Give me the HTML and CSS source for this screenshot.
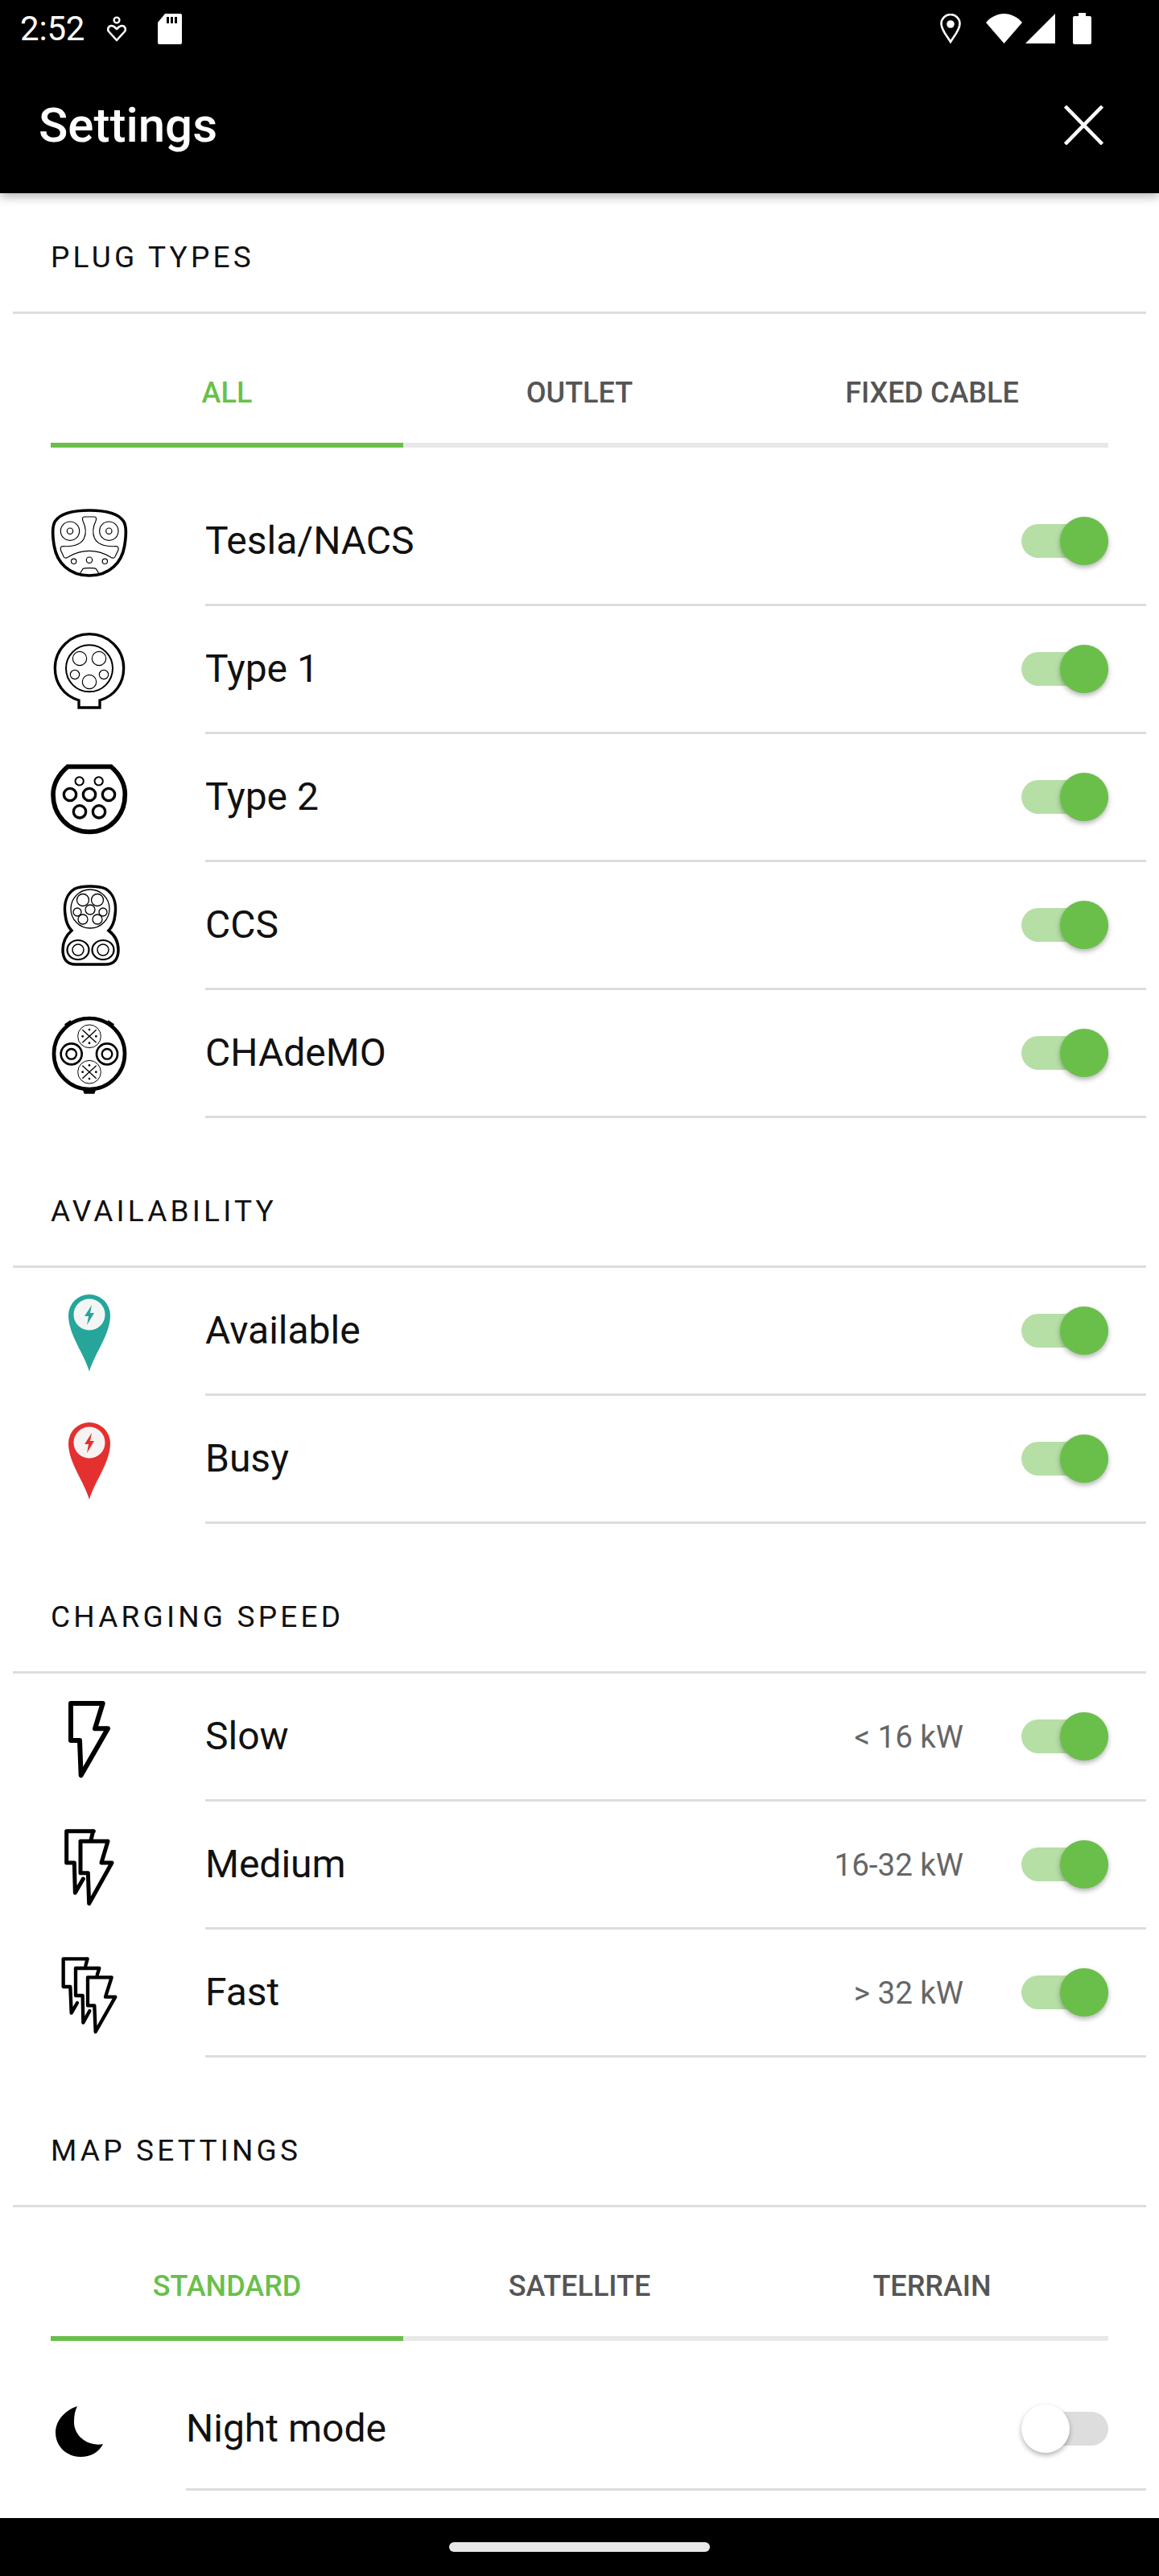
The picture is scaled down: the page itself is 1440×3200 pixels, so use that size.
FILE: index.html
```html
<!DOCTYPE html>
<html lang="en">
<head>
<meta charset="utf-8">
<title>Settings</title>
<link rel="stylesheet" href="styles.css">
</head>
<body>
<header class="app-header">
  <div class="status-bar">
    <span class="time">2:52</span>
    <svg class="st st-dnd" viewBox="0 0 24 32"><circle cx="12" cy="5" r="3.4" fill="none" stroke="#fff" stroke-width="2.4"/><path d="M12 30 2 19c-2-3 0-7 3.500-7 3 0 4.500 2 6.500 4 2-2 3.500-4 6.500-4C22 12 24 16 22 19Z" fill="none" stroke="#fff" stroke-width="2.600" stroke-linejoin="round"/></svg>
    <svg class="st st-sd" viewBox="0 0 30 38"><path d="M9 0H28a2 2 0 0 1 2 2V36a2 2 0 0 1-2 2H2a2 2 0 0 1-2-2V11Z" fill="#fff"/><path d="M11 4h3v8h-3zM16 4h3v8h-3zM21 4h3v8h-3z" fill="#000"/></svg>
    <span class="status-spacer"></span>
    <svg class="st st-loc" viewBox="0 0 26 37"><path d="M13 35C8 27 1.500 20 1.500 12.500a11.500 11.500 0 0 1 23 0C24.500 20 18 27 13 35Z" fill="none" stroke="#fff" stroke-width="2.600"/><circle cx="13" cy="13" r="4.800" fill="#fff"/></svg>
    <svg class="st st-wifi" viewBox="0 0 45 37"><path d="M22.500 37 0 11C6 4 14 0 22.500 0S39 4 45 11Z" fill="#fff"/></svg>
    <svg class="st st-sig" viewBox="0 0 37 37"><path d="M37 0V37H0Z" fill="#fff"/></svg>
    <svg class="st st-bat" viewBox="0 0 23 39"><path d="M7 0h9v4h5a2 2 0 0 1 2 2V37a2 2 0 0 1-2 2H2a2 2 0 0 1-2-2V6a2 2 0 0 1 2-2h5Z" fill="#fff"/></svg>
  </div>
  <div class="toolbar">
    <h1 class="toolbar-title">Settings</h1>
    <svg class="close" viewBox="0 0 49 49"><path d="M1.500 1 47.500 48M47.500 1 1.500 48" stroke="#fff" stroke-width="4.500" fill="none"/></svg>
  </div>
</header>

<main class="content">
  <h2 class="section-title first">PLUG TYPES</h2>
  <div class="tabs">
    <div class="tab active">ALL</div>
    <div class="tab">OUTLET</div>
    <div class="tab">FIXED CABLE</div>
  </div>
  <ul class="rows rows-tabbed">
    <li class="row">
      <svg class="icon" viewBox="69 15 288 336" fill="none" stroke="#000">
        <path d="M213 72C265 72 320 82 340 112C352 130 350 170 344 205C334 265 290 315 213 315C136 315 92 265 82 205C76 170 74 130 86 112C106 82 161 72 213 72Z" stroke-width="11"/>
        <g stroke-width="3.500"><circle cx="141" cy="149" r="35"/><circle cx="141" cy="149" r="11"/><circle cx="286" cy="149" r="35"/><circle cx="286" cy="149" r="11"/>
        <path d="M195 96H232C240 96 240 105 236 114C226 135 224 155 232 175C242 198 270 208 312 206C322 206 323 214 320 222L308 246C304 252 296 250 288 244C242 216 184 216 138 244C130 250 122 252 118 246L107 222C104 214 105 206 115 206C156 208 184 198 194 175C202 155 200 135 190 114C186 105 186 96 195 96Z"/>
        <circle cx="155" cy="262" r="9.500"/><circle cx="213" cy="257" r="11"/><circle cx="271" cy="262" r="9.500"/><path d="M179 306 189 290C192 286 236 286 238 290L248 306"/></g>
      </svg>
      <div class="row-body"><span class="label">Tesla/NACS</span><span class="toggle on"></span></div>
    </li>
    <li class="row">
      <svg class="icon" viewBox="69 12 288 336" fill="none" stroke="#000">
        <path d="M174 300C116 282 85 235 85 180C85 108 143 53 213 53S341 108 341 180C341 235 310 282 252 300V327H174Z" stroke-width="10"/>
        <circle cx="213" cy="181" r="87" stroke-width="6"/>
        <g stroke-width="3.500"><circle cx="177" cy="144" r="26"/><circle cx="249" cy="144" r="26"/><circle cx="159" cy="204" r="17"/><circle cx="267" cy="204" r="17"/><circle cx="213" cy="231" r="26"/></g>
      </svg>
      <div class="row-body"><span class="label">Type 1</span><span class="toggle on"></span></div>
    </li>
    <li class="row">
      <svg class="icon" viewBox="69 39 288 336" fill="none" stroke="#000">
        <path d="M132 97H294C326 125 346 160 346 201C346 281 288 340 213 340S78 281 78 201C78 160 100 125 132 97Z" stroke-width="17"/>
        <g stroke-width="6"><circle cx="176" cy="151" r="15.500"/><circle cx="248" cy="151" r="15.500"/></g>
        <g stroke-width="10"><circle cx="141" cy="201" r="23"/><circle cx="213" cy="201" r="23"/><circle cx="285" cy="201" r="23"/><circle cx="177" cy="265" r="23"/><circle cx="249" cy="265" r="23"/></g>
      </svg>
      <div class="row-body"><span class="label">Type 2</span><span class="toggle on"></span></div>
    </li>
    <li class="row">
      <svg class="icon" viewBox="0 0 96 112" fill="none" stroke="#000">
        <path d="M30 12C40 8 58 8 68 12C78 18 82 30 80 44C79 54 76 60 72 64C80 70 84 78 84 88C84 100 78 106 68 106H31C21 106 15 100 15 88C15 78 19 70 26 64C22 60 19 54 18 44C16 30 20 18 30 12Z" stroke-width="3.500"/>
        <g stroke-width="1.300"><circle cx="49" cy="37" r="24"/><circle cx="40" cy="26" r="7.500"/><circle cx="58" cy="26" r="7.500"/><circle cx="33" cy="41" r="5"/><circle cx="65" cy="41" r="5"/><circle cx="40" cy="50" r="6"/><circle cx="58" cy="50" r="6"/><circle cx="49" cy="38" r="6"/></g>
        <g stroke-width="2.200"><ellipse cx="34" cy="88" rx="13.500" ry="12"/><ellipse cx="65" cy="88" rx="13.500" ry="12"/></g>
        <g stroke-width="1.500"><circle cx="34" cy="88" r="7"/><circle cx="65" cy="88" r="7"/></g>
      </svg>
      <div class="row-body"><span class="label">CCS</span><span class="toggle on"></span></div>
    </li>
    <li class="row">
      <svg class="icon" viewBox="69 123 288 336" fill="none" stroke="#000">
        <circle cx="213" cy="297" r="132" stroke-width="14"/>
        <path d="M120 187 142 172 152 186 128 200ZM306 187 284 172 274 186 298 200ZM188 430H238L232 446H194Z" fill="#000" stroke="none"/>
        <g stroke-width="3"><circle cx="213" cy="232" r="43"/><circle cx="213" cy="365" r="43"/></g>
        <g stroke-width="4"><path d="M187 208 239 256M239 208 187 256M187 341 239 389M239 341 187 389"/></g>
        <g fill="#000" stroke="none"><circle cx="213" cy="207" r="4"/><circle cx="188" cy="232" r="4"/><circle cx="238" cy="232" r="4"/><circle cx="213" cy="257" r="4"/><circle cx="213" cy="340" r="4"/><circle cx="188" cy="365" r="4"/><circle cx="238" cy="365" r="4"/><circle cx="213" cy="390" r="4"/></g>
        <g stroke-width="8"><circle cx="146" cy="298" r="39"/><circle cx="279" cy="298" r="39"/></g>
        <g stroke-width="7"><circle cx="146" cy="298" r="19"/><circle cx="279" cy="298" r="19"/></g>
      </svg>
      <div class="row-body"><span class="label">CHAdeMO</span><span class="toggle on"></span></div>
    </li>
  </ul>

  <h2 class="section-title">AVAILABILITY</h2>
  <ul class="rows">
    <li class="row">
      <svg class="icon" viewBox="0 0 96 112">
        <path d="M48 108C42 86 22 62 22 38A26 26 0 0 1 74 38C74 62 54 86 48 108Z" fill="#26a69a"/>
        <circle cx="48" cy="37" r="19.500" fill="#f4f6f5"/>
        <path d="M51 25 42 39H47L45 50 54 35H49Z" fill="#26a69a"/>
      </svg>
      <div class="row-body"><span class="label">Available</span><span class="toggle on"></span></div>
    </li>
    <li class="row">
      <svg class="icon" viewBox="0 0 96 112">
        <path d="M48 108C42 86 22 62 22 38A26 26 0 0 1 74 38C74 62 54 86 48 108Z" fill="#e53030"/>
        <circle cx="48" cy="37" r="19.500" fill="#f7f3f3"/>
        <path d="M51 25 42 39H47L45 50 54 35H49Z" fill="#e53030"/>
      </svg>
      <div class="row-body"><span class="label">Busy</span><span class="toggle on"></span></div>
    </li>
  </ul>

  <h2 class="section-title">CHARGING SPEED</h2>
  <ul class="rows">
    <li class="row">
      <svg class="icon" viewBox="69 28 288 336" fill="none" stroke="#000" stroke-width="18" stroke-linejoin="round" stroke-linecap="round">
        <path d="M144 76H263L234 170H282L182 344 177 214H144Z"/>
      </svg>
      <div class="row-body"><span class="label">Slow</span><span class="value">&lt; 16 kW</span><span class="toggle on"></span></div>
    </li>
    <li class="row">
      <svg class="icon" viewBox="69 -5 288 336" fill="none" stroke="#000" stroke-width="15" stroke-linejoin="round" stroke-linecap="round">
        <path d="M227 42 219 76M229 42H128V160H157L160 272 190 220"/>
        <path d="M180 80H282L258 160H297L212 312 208 198H180Z"/>
      </svg>
      <div class="row-body"><span class="label">Medium</span><span class="value">16-32 kW</span><span class="toggle on"></span></div>
    </li>
    <li class="row">
      <svg class="icon" viewBox="69 472 288 336" fill="none" stroke="#000" stroke-width="13" stroke-linejoin="round" stroke-linecap="round">
        <path d="M206 518H116V622H142L146 720 168 682M206 518 199 544"/>
        <path d="M250 553H162V655H188L190 756 214 712M250 553 242 579"/>
        <path d="M207 587H296L273 660H310L236 790 232 692H207Z"/>
      </svg>
      <div class="row-body"><span class="label">Fast</span><span class="value">&gt; 32 kW</span><span class="toggle on"></span></div>
    </li>
  </ul>

  <h2 class="section-title">MAP SETTINGS</h2>
  <div class="tabs">
    <div class="tab active">STANDARD</div>
    <div class="tab">SATELLITE</div>
    <div class="tab">TERRAIN</div>
  </div>
  <div class="row row-night">
    <svg class="moon" viewBox="0 0 59 63"><path d="M27 0C10 6 0 19 0 33C0 50 14 63 31 63C44 63 54 57 59 47C56 48 52 48 47 47C32 44 23 32 23 20C23 12 24 6 27 0Z" fill="#000"/></svg>
    <div class="row-body"><span class="label">Night mode</span><span class="toggle"></span></div>
  </div>
</main>

<footer class="nav-bar"><span class="nav-pill"></span></footer>
</body>
</html>
```

FILE: styles.css
```css
* { box-sizing: border-box; }
html, body { margin: 0; padding: 0; }
body {
  width: 1440px;
  height: 3200px;
  display: flex;
  flex-direction: column;
  overflow: hidden;
  background: #fff;
  font-family: Roboto, "Liberation Sans", sans-serif;
  color: #000;
}

.app-header {
  flex: none;
  height: 240px;
  background: #000;
  color: #fff;
  box-shadow: 0 4px 12px rgba(0, 0, 0, .3);
  position: relative;
  z-index: 1;
}
.status-bar {
  height: 72px;
  display: flex;
  align-items: flex-start;
  padding: 17px 84px 0 25px;
}
.time { font-size: 42px; line-height: 38px; width: 108px; letter-spacing: -.2px; }
.st { display: block; flex: none; }
.st-dnd { width: 24px; height: 32px; margin-top: 3px; }
.st-sd { width: 30px; height: 38px; margin-left: 39px; }
.status-spacer { flex: 1; }
.st-loc { width: 26px; height: 37px; }
.st-wifi { width: 45px; height: 37px; margin-left: 31px; }
.st-sig { width: 37px; height: 37px; margin-left: 4px; }
.st-bat { width: 23px; height: 39px; margin-left: 22px; margin-top: -1px; }

.toolbar {
  height: 168px;
  display: flex;
  align-items: center;
  justify-content: space-between;
  padding: 0 69px 0 48px;
}
.toolbar-title { margin: 0; font-size: 60px; font-weight: 500; line-height: 68px; }
.close { width: 49px; height: 49px; display: block; margin-top: -2px; }

.content { flex: 1; min-height: 0; overflow: hidden; }

.section-title {
  margin: 94px 16px 0;
  padding: 0 0 45px 47px;
  border-bottom: 3px solid #ddd;
  font-size: 37px;
  font-weight: 400;
  line-height: 44px;
  letter-spacing: 4.200px;
  color: #111;
}
.section-title.first { margin-top: 58px; }

.tabs { display: flex; margin: 0 63px; height: 166px; }
.tab {
  flex: 1;
  display: flex;
  align-items: center;
  justify-content: center;
  padding-top: 36px;
  border-bottom: 6px solid #e8e8e8;
  font-size: 36px;
  font-weight: 500;
  color: #555;
}
.tab.active { color: #6abf4b; border-bottom-color: #6abf4b; }

.rows { list-style: none; margin: 0; padding: 0; }
.rows-tabbed { margin-top: 38px; }
.row { display: flex; align-items: stretch; padding: 0 16px 0 63px; }
.icon { flex: none; width: 96px; height: 112px; margin: 21px 96px 0 0; display: block; overflow: visible; }
.row-body {
  flex: 1;
  height: 159px;
  display: flex;
  align-items: center;
  padding-right: 47px;
  border-bottom: 3px solid #ddd;
}
.label { flex: 1; font-size: 48px; line-height: 56px; color: #111; }
.value { font-size: 38.500px; color: #666; margin-right: 72px; }

.toggle { flex: none; width: 108px; height: 42px; border-radius: 21px; background: #ddd; position: relative; }
.toggle::after {
  content: "";
  position: absolute;
  left: 0;
  top: -9px;
  width: 60px;
  height: 60px;
  border-radius: 50%;
  background: #fff;
  box-shadow: 0 3px 6px rgba(0, 0, 0, .3);
}
.toggle.on { background: #b6dfa6; }
.toggle.on::after { left: 48px; background: #6abf4b; }

.row-night { padding-left: 69px; margin-top: 35px; }
.row-night .row-body { height: 151px; }
.moon { flex: none; width: 59px; height: 63px; margin: 46px 103px 0 0; display: block; }

.nav-bar {
  flex: none;
  height: 72px;
  background: #000;
  display: flex;
  justify-content: center;
  padding-top: 30px;
}
.nav-pill { width: 324px; height: 12px; border-radius: 6px; background: #e8e8e8; }
```
